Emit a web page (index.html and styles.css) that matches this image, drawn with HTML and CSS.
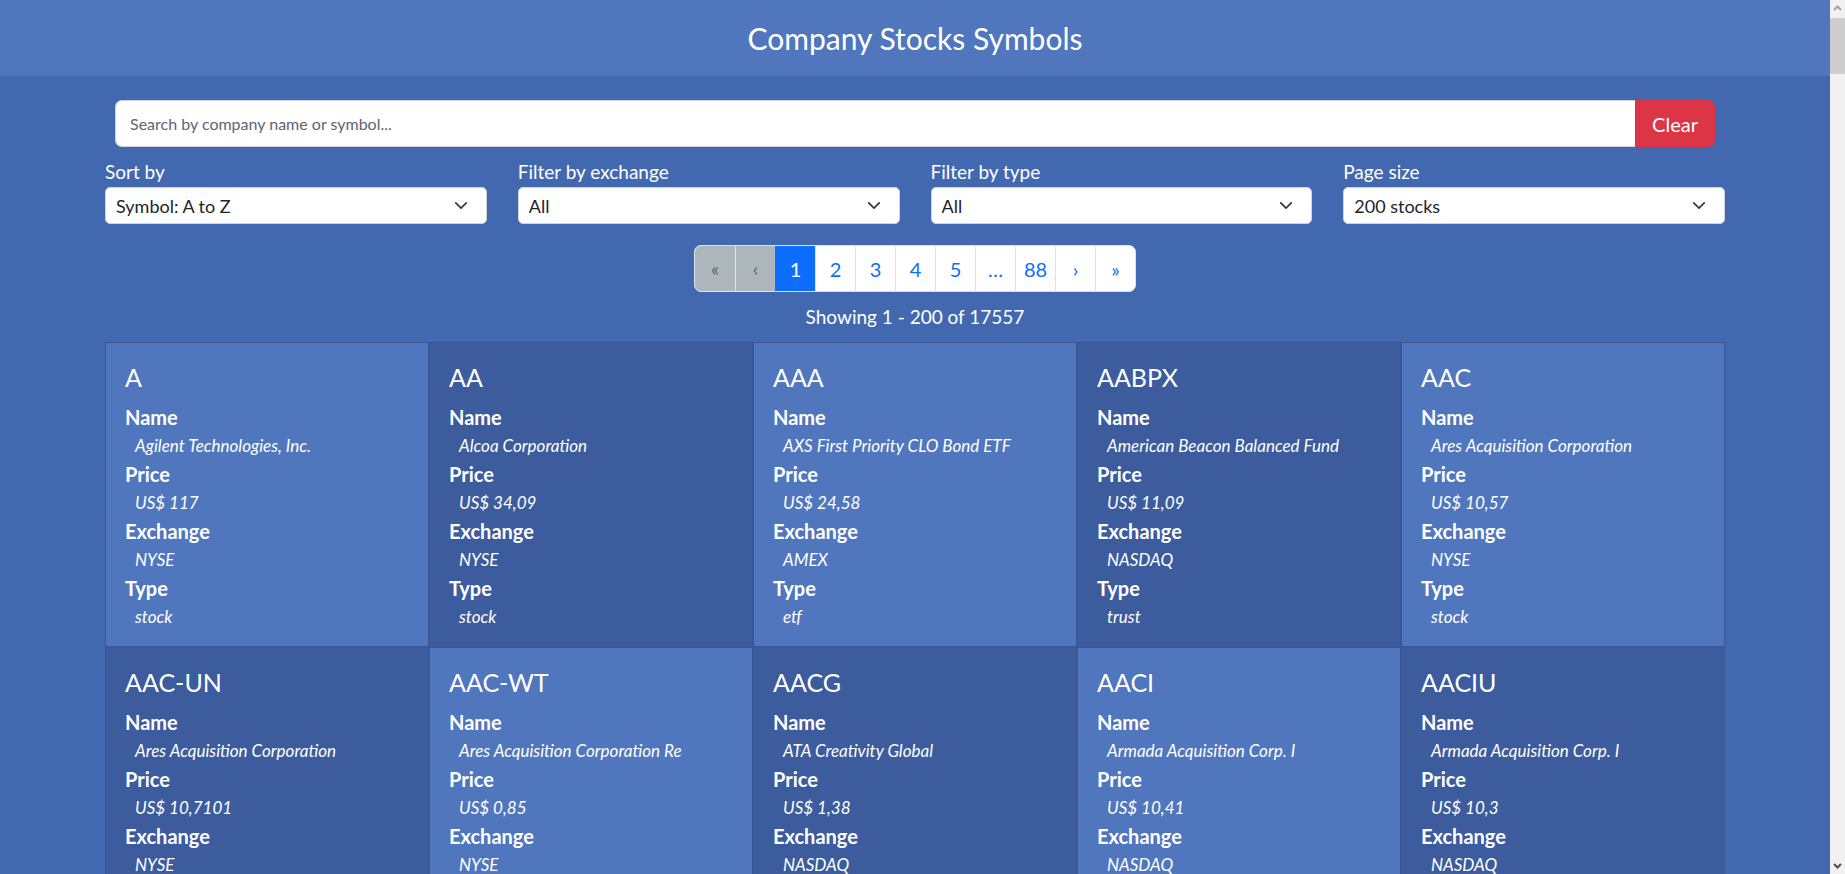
FILE: index.html
```html
<!DOCTYPE html>
<html lang="en">
<head>
<meta charset="utf-8">
<title>Company Stocks Symbols</title>
<link rel="stylesheet" href="styles.css">
</head>
<body>
<header class="top">
  <h1 class="title">Company Stocks Symbols</h1>
</header>
<main class="container">
  <div class="search">
    <input class="search-input" type="text" placeholder="Search by company name or symbol...">
    <button class="clear-btn">Clear</button>
  </div>
  <div class="filters">
    <label class="filter">
      <span class="filter-label">Sort by</span>
      <span class="select-wrap">
        <select class="select"><option>Symbol: A to Z</option></select>
        <svg class="chev" viewBox="0 0 16 10" width="14" height="9"><path d="M2 2l6 6 6-6" fill="none" stroke="#343a40" stroke-width="2" stroke-linecap="round" stroke-linejoin="round"/></svg>
      </span>
    </label>
    <label class="filter">
      <span class="filter-label">Filter by exchange</span>
      <span class="select-wrap">
        <select class="select"><option>All</option></select>
        <svg class="chev" viewBox="0 0 16 10" width="14" height="9"><path d="M2 2l6 6 6-6" fill="none" stroke="#343a40" stroke-width="2" stroke-linecap="round" stroke-linejoin="round"/></svg>
      </span>
    </label>
    <label class="filter">
      <span class="filter-label">Filter by type</span>
      <span class="select-wrap">
        <select class="select"><option>All</option></select>
        <svg class="chev" viewBox="0 0 16 10" width="14" height="9"><path d="M2 2l6 6 6-6" fill="none" stroke="#343a40" stroke-width="2" stroke-linecap="round" stroke-linejoin="round"/></svg>
      </span>
    </label>
    <label class="filter">
      <span class="filter-label">Page size</span>
      <span class="select-wrap">
        <select class="select"><option>200 stocks</option></select>
        <svg class="chev" viewBox="0 0 16 10" width="14" height="9"><path d="M2 2l6 6 6-6" fill="none" stroke="#343a40" stroke-width="2" stroke-linecap="round" stroke-linejoin="round"/></svg>
      </span>
    </label>
  </div>
  <nav class="pager-wrap">
    <ul class="pager">
      <li class="page disabled">«</li>
      <li class="page disabled">‹</li>
      <li class="page active">1</li>
      <li class="page">2</li>
      <li class="page">3</li>
      <li class="page">4</li>
      <li class="page">5</li>
      <li class="page">…</li>
      <li class="page">88</li>
      <li class="page">›</li>
      <li class="page">»</li>
    </ul>
  </nav>
  <p class="showing">Showing 1 - 200 of 17557</p>
  <section class="cards">
    <article class="card"><h2 class="sym">A</h2><dl class="info"><dt>Name</dt><dd>Agilent Technologies, Inc.</dd><dt>Price</dt><dd>US$ 117</dd><dt>Exchange</dt><dd>NYSE</dd><dt>Type</dt><dd>stock</dd></dl></article>
    <article class="card dark"><h2 class="sym">AA</h2><dl class="info"><dt>Name</dt><dd>Alcoa Corporation</dd><dt>Price</dt><dd>US$ 34,09</dd><dt>Exchange</dt><dd>NYSE</dd><dt>Type</dt><dd>stock</dd></dl></article>
    <article class="card"><h2 class="sym">AAA</h2><dl class="info"><dt>Name</dt><dd>AXS First Priority CLO Bond ETF</dd><dt>Price</dt><dd>US$ 24,58</dd><dt>Exchange</dt><dd>AMEX</dd><dt>Type</dt><dd>etf</dd></dl></article>
    <article class="card dark"><h2 class="sym">AABPX</h2><dl class="info"><dt>Name</dt><dd>American Beacon Balanced Fund</dd><dt>Price</dt><dd>US$ 11,09</dd><dt>Exchange</dt><dd>NASDAQ</dd><dt>Type</dt><dd>trust</dd></dl></article>
    <article class="card"><h2 class="sym">AAC</h2><dl class="info"><dt>Name</dt><dd>Ares Acquisition Corporation</dd><dt>Price</dt><dd>US$ 10,57</dd><dt>Exchange</dt><dd>NYSE</dd><dt>Type</dt><dd>stock</dd></dl></article>
    <article class="card dark"><h2 class="sym">AAC-UN</h2><dl class="info"><dt>Name</dt><dd>Ares Acquisition Corporation</dd><dt>Price</dt><dd>US$ 10,7101</dd><dt>Exchange</dt><dd>NYSE</dd><dt>Type</dt><dd>unit</dd></dl></article>
    <article class="card"><h2 class="sym">AAC-WT</h2><dl class="info"><dt>Name</dt><dd>Ares Acquisition Corporation Re</dd><dt>Price</dt><dd>US$ 0,85</dd><dt>Exchange</dt><dd>NYSE</dd><dt>Type</dt><dd>warrant</dd></dl></article>
    <article class="card dark"><h2 class="sym">AACG</h2><dl class="info"><dt>Name</dt><dd>ATA Creativity Global</dd><dt>Price</dt><dd>US$ 1,38</dd><dt>Exchange</dt><dd>NASDAQ</dd><dt>Type</dt><dd>adr</dd></dl></article>
    <article class="card"><h2 class="sym">AACI</h2><dl class="info"><dt>Name</dt><dd>Armada Acquisition Corp. I</dd><dt>Price</dt><dd>US$ 10,41</dd><dt>Exchange</dt><dd>NASDAQ</dd><dt>Type</dt><dd>stock</dd></dl></article>
    <article class="card dark"><h2 class="sym">AACIU</h2><dl class="info"><dt>Name</dt><dd>Armada Acquisition Corp. I</dd><dt>Price</dt><dd>US$ 10,3</dd><dt>Exchange</dt><dd>NASDAQ</dd><dt>Type</dt><dd>unit</dd></dl></article>
  </section>
</main>
<div class="scrollbar" aria-hidden="true">
  <svg class="sb-arrow" viewBox="0 0 15 17" width="15" height="17"><path d="M4 10l3.5-3.5L11 10" fill="none" stroke="#a3a3a3" stroke-width="2"/></svg>
  <div class="sb-thumb"></div>
  <div class="sb-track"></div>
  <svg class="sb-arrow" viewBox="0 0 15 17" width="15" height="17"><path d="M4 7l3.5 3.5L11 7" fill="none" stroke="#505050" stroke-width="2"/></svg>
</div>
</body>
</html>
```
FILE: styles.css
```css
* { box-sizing: border-box; }
html, body {
  margin: 0;
  padding: 0;
}
body {
  background: #4268b0;
  color: #fff;
  font-family: Lato, "Open Sans", "Liberation Sans", sans-serif;
  margin-right: 15px;
}
.top {
  background: #5077be;
  height: 76px;
  display: flex;
  align-items: center;
  justify-content: center;
}
.title {
  margin: 0;
  font-size: 30px;
  font-weight: 400;
  line-height: 1.2;
}
.container {
  width: 1620px;
  margin: 0 auto;
  padding-top: 24px;
}
.search {
  display: flex;
  margin: 0 10px;
  height: 47px;
}
.search-input {
  flex: 1;
  height: 47px;
  border: 1px solid #ced4da;
  border-right: none;
  border-radius: 7px 0 0 7px;
  padding: 0 14px;
  font-family: Lato, "Open Sans", sans-serif;
  font-size: 16px;
  color: #212529;
  background: #fff;
  outline: none;
}
.search-input::placeholder { color: #5d6570; }
.clear-btn {
  width: 80px;
  height: 47px;
  border: none;
  border-radius: 0 7px 7px 0;
  background: #dc3545;
  color: #fff;
  font-family: Lato, "Open Sans", sans-serif;
  font-size: 20px;
  padding: 0;
}
.filters {
  display: grid;
  grid-template-columns: repeat(4, 1fr);
  column-gap: 31px;
  margin-top: 13px;
}
.filter {
  display: flex;
  flex-direction: column;
}
.filter-label {
  font-size: 19px;
  line-height: 23px;
  margin-bottom: 4px;
}
.select-wrap {
  position: relative;
  display: block;
}
.select {
  -webkit-appearance: none;
  appearance: none;
  width: 100%;
  height: 37px;
  border: 1px solid #ced4da;
  border-radius: 5px;
  background: #fff;
  color: #212529;
  font-family: Lato, "Open Sans", sans-serif;
  font-size: 18px;
  padding: 0 40px 0 10px;
  outline: none;
}
.chev {
  position: absolute;
  right: 19px;
  top: 14px;
  pointer-events: none;
}
.pager-wrap {
  display: flex;
  justify-content: center;
  margin-top: 21px;
}
.pager {
  display: flex;
  list-style: none;
  margin: 0;
  padding: 0;
  border: 1px solid #dee2e6;
  border-radius: 7px;
  overflow: hidden;
  background: #fff;
}
.page {
  width: 40px;
  height: 45px;
  display: flex;
  align-items: center;
  justify-content: center;
  font-size: 20px;
  color: #0d6efd;
  background: #fff;
  border-left: 1px solid #dee2e6;
}
.page:first-child { border-left: none; }
.page.disabled {
  background: #adb5bd;
  color: #5d636b;
  font-size: 19px;
}
.page.active {
  background: #0d6efd;
  color: #fff;
  border-left-color: #0d6efd;
}
.showing {
  text-align: center;
  font-size: 19px;
  line-height: 22px;
  margin: 14px 0 14px;
}
.cards {
  display: grid;
  grid-template-columns: repeat(5, 1fr);
}
.card {
  background: #5077be;
  border: 1px solid #3a5796;
  padding: 20px 20px 13px 19px;
  min-height: 305px;
}
.card.dark {
  background: #3c5c9d;
}
.sym {
  margin: 0 0 13px;
  font-size: 25px;
  font-weight: 400;
  line-height: 29px;
}
.info {
  margin: 0;
}
.info dt {
  font-size: 20px;
  font-weight: 700;
  line-height: 24px;
}
.info dd {
  margin: 0 0 2px 10px;
  padding-top: 2px;
  font-size: 17px;
  font-style: italic;
  line-height: 29px;
}
.scrollbar {
  position: fixed;
  top: 0;
  right: 0;
  bottom: 0;
  width: 15px;
  background: #f1f1f1;
  display: flex;
  flex-direction: column;
}
.sb-arrow {
  flex: none;
  display: block;
}
.sb-thumb {
  flex: none;
  height: 56px;
  margin: 1px 0 0;
  background: #cdcdcd;
}
.sb-track {
  flex: 1;
}
```
